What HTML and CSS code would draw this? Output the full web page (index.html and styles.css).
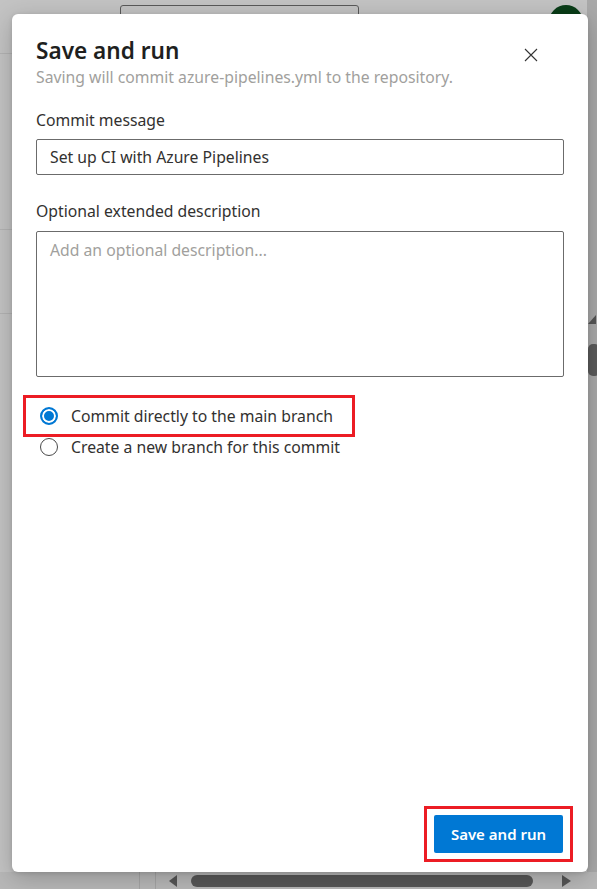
FILE: index.html
```html
<!DOCTYPE html>
<html lang="en">
<head>
<meta charset="utf-8">
<title>Save and run</title>
<link rel="stylesheet" href="styles.css">
</head>
<body>
<div class="backdrop" aria-hidden="true">
  <div class="bg-field"></div>
  <div class="bg-avatar"></div>
  <div class="bg-rule bg-rule-top"></div>
  <div class="bg-rule bg-rule-l1"></div>
  <div class="bg-rule bg-rule-l2"></div>
  <div class="bg-vscroll">
    <span class="bg-up"></span>
    <span class="bg-vthumb"></span>
  </div>
  <div class="bg-hscroll">
    <span class="bg-sep"></span>
    <span class="bg-left"></span>
    <span class="bg-hthumb"></span>
    <span class="bg-right"></span>
  </div>
</div>

<div class="dialog" role="dialog" aria-labelledby="dlg-title">
  <header class="dialog-header">
    <div class="titles">
      <h1 id="dlg-title" class="title">Save and run</h1>
      <p class="subtitle">Saving will commit azure-pipelines.yml to the repository.</p>
    </div>
    <button class="close" aria-label="Close">
      <svg width="14" height="14" viewBox="0 0 14 14"><path d="M1 1 L13 13 M13 1 L1 13" stroke="#333" stroke-width="1.1" fill="none"/></svg>
    </button>
  </header>

  <div class="dialog-body">
    <label class="field-label" for="msg">Commit message</label>
    <input id="msg" class="text-input" type="text" value="Set up CI with Azure Pipelines">

    <label class="field-label second" for="desc">Optional extended description</label>
    <textarea id="desc" class="text-area" placeholder="Add an optional description..."></textarea>

    <div class="options">
      <label class="option marked">
        <span class="radio checked"></span>
        <span>Commit directly to the main branch</span>
      </label>
      <label class="option">
        <span class="radio"></span>
        <span>Create a new branch for this commit</span>
      </label>
    </div>
  </div>

  <footer class="dialog-footer">
    <button class="primary">Save and run</button>
  </footer>
</div>
</body>
</html>
```
FILE: styles.css
```css
* { box-sizing: border-box; }
html, body { margin: 0; padding: 0; }
body {
  width: 597px;
  height: 889px;
  overflow: hidden;
  background: #c3c3c3;
  font-family: "Noto Sans", "Open Sans", sans-serif;
  position: relative;
}

/* underlying page, dimmed */
.backdrop { position: absolute; inset: 0; }
.bg-field {
  position: absolute; left: 120px; top: 5px; width: 239px; height: 20px;
  border: 1px solid #5a5a5a; border-radius: 3px;
}
.bg-avatar {
  position: absolute; left: 549px; top: 5px; width: 34px; height: 34px;
  border-radius: 50%; background: #0a3d18;
}
.bg-rule { position: absolute; left: 0; right: 0; height: 1px; background: #b3b3b3; }
.bg-rule-top { top: 53px; }
.bg-rule-l1 { top: 229px; }
.bg-rule-l2 { top: 313px; }
.bg-vscroll {
  position: absolute; right: 0; top: 0; width: 10px; height: 872px;
  background: #a9a9a9;
}
.bg-up {
  position: absolute; left: 1px; top: 315px; width: 0; height: 0;
  border-left: 8px solid transparent; border-bottom: 9px solid #555;
}
.bg-vthumb {
  position: absolute; left: 1px; top: 344px; width: 12px; height: 32px;
  border-radius: 5px; background: #5b5b5b;
}
.bg-hscroll {
  position: absolute; left: 0; right: 0; bottom: 0; height: 17px;
  background: #b8b8b8;
}
.bg-sep {
  position: absolute; left: 139px; top: 0; width: 17px; height: 17px;
  border-left: 1px solid #a5a5a5; border-right: 1px solid #a5a5a5;
}
.bg-left {
  position: absolute; left: 169px; top: 3px; width: 0; height: 0;
  border-top: 6px solid transparent; border-bottom: 6px solid transparent;
  border-right: 8px solid #555;
}
.bg-hthumb {
  position: absolute; left: 191px; top: 3px; width: 342px; height: 12px;
  border-radius: 6px; background: #575757;
}
.bg-right {
  position: absolute; left: 562px; top: 3px; width: 0; height: 0;
  border-top: 6px solid transparent; border-bottom: 6px solid transparent;
  border-left: 9px solid #555;
}

/* dialog */
.dialog {
  position: absolute; left: 12px; top: 14px; width: 576px; height: 858px;
  background: #fff; border-radius: 6px;
  box-shadow: 0 6px 24px rgba(0,0,0,0.22), 0 1px 4px rgba(0,0,0,0.12);
  display: flex; flex-direction: column;
  padding: 22px 24px 19px 24px;
  color: #323130;
}
.dialog-header { display: flex; justify-content: space-between; align-items: flex-start; }
.title {
  margin: 0; font-size: 22.6px; line-height: 30px; font-weight: 600; color: #201f1e;
}
.subtitle {
  margin: 1px 0 0; font-size: 15.75px; line-height: 20px; color: #a19f9d;
}
.close {
  border: 0; background: none; padding: 0; margin: 12px 26px 0 0;
  width: 14px; height: 14px; cursor: pointer; display: block;
}
.close svg { display: block; }

.dialog-body { display: flex; flex-direction: column; }
.field-label { font-size: 15.75px; line-height: 20px; margin-top: 23px; color: #323130; }
.field-label.second { margin-top: 26px; }
.text-input {
  margin-top: 9px; height: 36px; width: 100%;
  border: 1px solid #6b6b6b; border-radius: 2px;
  padding: 0 13px; font: inherit; font-size: 15.75px; color: #323130;
}
.text-area {
  margin-top: 10px; height: 146px; width: 100%; resize: none;
  border: 1px solid #6b6b6b; border-radius: 2px;
  padding: 8px 13px; font: inherit; font-size: 15.75px; line-height: 20px;
}
.text-area::placeholder { color: #a19f9d; opacity: 1; }

.options { margin-top: 23px; display: flex; flex-direction: column; }
.option {
  position: relative; display: flex; align-items: center; gap: 13px;
  height: 31px; padding-left: 4px; font-size: 15.75px; color: #323130;
}
.option.marked { width: 313px; }
.option.marked::after {
  content: ""; position: absolute; left: -13px; top: -5px; width: 326px; height: 36px;
  border: 3px solid #ec1c24;
}
.radio {
  width: 18px; height: 18px; border-radius: 50%; flex: none;
  border: 1px solid #4a4a4a; background: #fff;
}
.radio.checked {
  border: 2px solid #0078d4;
  box-shadow: inset 0 0 0 2px #fff;
  background: #0078d4;
}

.dialog-footer { margin-top: auto; display: flex; justify-content: flex-end; padding-right: 1px; }
.primary {
  position: relative; height: 38px; width: 129px;
  border: 0; border-radius: 2px; background: #0078d4; color: #fff;
  font: inherit; font-size: 15px; font-weight: 600; cursor: pointer;
}
.primary::after {
  content: ""; position: absolute; left: -10px; right: -10px; top: -9px; bottom: -9px;
  border: 3px solid #ec1c24;
}
```
